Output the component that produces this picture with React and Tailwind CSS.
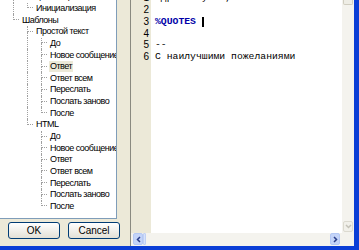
import React from "react";

const ui = { fontFamily: '"Liberation Sans", Arial, sans-serif' };
const mono = { fontFamily: '"Liberation Mono", "Courier New", monospace' };

const names = ["До", "Новое сообщение", "Ответ", "Ответ всем", "Переслать", "Послать заново", "После"];

function kids(anc, sel) {
  return names.map((t, i) => ({ t, anc, next: i < names.length - 1, sel: sel && t === "Ответ" }));
}

const rows = [
  { t: "Общие настройки", anc: [], next: true },
  { t: "Инициализация", anc: [true], next: false },
  { t: "Шаблоны", anc: [], next: false },
  { t: "Простой текст", anc: [false], next: true },
  ...kids([false, true], true),
  { t: "HTML", anc: [false], next: false },
  ...kids([false, false], false),
];

function Row({ r }) {
  return (
    <div className="flex h-[11.65px] items-stretch">
      <div className="w-[6px] shrink-0" />
      {r.anc.map((c, i) => (
        <div key={i} className="w-[14px] shrink-0">
          {c && <div className="ml-[7px] h-full border-l border-dotted border-[#a0a0a0]" />}
        </div>
      ))}
      <div className="w-[14px] shrink-0 flex flex-col">
        <div className="ml-[7px] w-[6px] h-1/2 border-l border-b border-dotted border-[#a0a0a0]" />
        {r.next && <div className="ml-[7px] flex-1 border-l border-dotted border-[#a0a0a0]" />}
      </div>
      <div
        className={
          "ml-[1px] px-[1px] flex items-center leading-none whitespace-nowrap text-[9px] tracking-[-0.5px] text-black " +
          (r.sel ? "bg-[#ece9d8]" : "")
        }
      >
        {r.t}
      </div>
    </div>
  );
}

function Btn({ children }) {
  return (
    <button className="w-[52px] h-[17px] rounded-[3px] border border-[#003c74] bg-gradient-to-b from-white to-[#e3e0d6] text-[10px] text-black leading-none">
      {children}
    </button>
  );
}

const lines = [
  [
    { t: "Здравствуйте, " },
    { t: "%FIRSTNAME", b: true },
    { t: "!" },
  ],
  [],
  [{ t: "%QUOTES", b: true }, { t: " " }, { caret: true }],
  [],
  [{ t: "--" }],
  [{ t: "С наилучшими пожеланиями" }],
];

export default function App() {
  return (
    <div className="w-[359px] h-[250px] bg-[#ece9d8] flex flex-col overflow-hidden" style={ui}>
      <div className="flex flex-1 min-h-0">
        <div className="w-[130px] shrink-0 flex flex-col">
          <div className="w-[117px] h-[219px] bg-white border-r border-b border-[#7f9db9] overflow-hidden">
            <div className="mt-[-9px]">
              {rows.map((r, i) => (
                <Row key={i} r={r} />
              ))}
            </div>
          </div>
          <div className="flex gap-[8px] pl-[8px] mt-[3px]">
            <Btn>OK</Btn>
            <Btn>Cancel</Btn>
          </div>
        </div>

        <div className="flex-1 flex flex-col border-l border-[#8a8a80] min-w-0">
          <div className="flex flex-1 min-h-0">
            <div className="w-[20px] shrink-0 bg-[#ece9d8] overflow-hidden">
              <div className="mt-[-7.6px]">
                {lines.map((l, i) => (
                  <div key={i} className="h-[11.75px] flex items-center justify-end pr-[2px] text-[10px] leading-none text-black">
                    {i + 1}
                  </div>
                ))}
              </div>
            </div>
            <div className="flex-1 bg-white overflow-hidden pl-[4px]" style={mono}>
              <div className="mt-[-7.6px]">
                {lines.map((l, i) => (
                  <div key={i} className="h-[11.75px] flex items-center whitespace-pre text-[9.75px] leading-none text-black">
                    {l.map((s, j) =>
                      s.caret ? (
                        <span key={j} className="inline-block w-[2px] h-[10px] bg-black" />
                      ) : (
                        <span key={j} className={s.b ? "font-bold text-[#0000a8]" : ""}>
                          {s.t}
                        </span>
                      )
                    )}
                  </div>
                ))}
              </div>
            </div>
            <div className="w-[12px] shrink-0 bg-[#f4f3ee] flex flex-col">
              <div className="h-[5px] mx-[1px] rounded-b-[2px] border border-t-0 border-[#d0cdc0] bg-[#eeede5]" />
              <div className="flex-1" />
              <div className="h-[11px] mx-[1px] mb-[1px] rounded-[2px] border border-[#dcdad0] bg-[#f1f0ea] flex items-center justify-center">
                <svg width="7" height="5" viewBox="0 0 7 5">
                  <path d="M1 1l2.5 2.5L6 1" fill="none" stroke="#c4c2b8" strokeWidth="1.5" />
                </svg>
              </div>
            </div>
          </div>
          <div className="h-[13px] shrink-0 flex bg-[#f4f3ee] pr-[14px]">
            <div className="w-[10px] h-[12px] ml-[2px] rounded-[2px] bg-[#c4d4f8] border border-[#b4c8f4] flex items-center justify-center">
              <svg width="5" height="7" viewBox="0 0 5 7">
                <path d="M4 1L1.5 3.5L4 6" fill="none" stroke="#2b3f8a" strokeWidth="1.5" />
              </svg>
            </div>
            <div className="w-[3px] h-[12px] rounded-[1px] bg-[#d6e2fb] border border-[#c0d0f4]" />
            <div className="flex-1" />
            <div className="w-[10px] h-[12px] rounded-[2px] bg-[#c4d4f8] border border-[#b4c8f4] flex items-center justify-center">
              <svg width="5" height="7" viewBox="0 0 5 7">
                <path d="M1 1l2.5 2.5L1 6" fill="none" stroke="#2b3f8a" strokeWidth="1.5" />
              </svg>
            </div>
          </div>
        </div>
        <div className="w-[5px] shrink-0 bg-[#0a3ed6]" />
      </div>
      <div className="h-[4px] shrink-0 bg-[#0a3ed6]" />
    </div>
  );
}
